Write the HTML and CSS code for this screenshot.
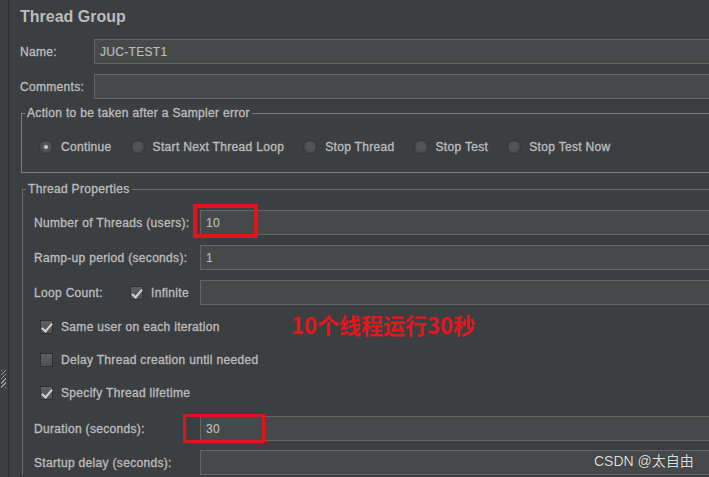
FILE: index.html
```html
<!DOCTYPE html>
<html>
<head>
    <link rel="stylesheet" href="styles.css">
</head>
<body>
    <div class="side">
        <div class="grip"></div>
    </div>
    <div class="main">
        <h1 class="title">Thread Group</h1>

        <div class="row">
            <label class="row-label">Name:</label>
            <input class="field" type="text" value="JUC-TEST1">
        </div>
        <div class="row">
            <label class="row-label">Comments:</label>
            <input class="field" type="text" value="">
        </div>

        <fieldset class="group action-group">
            <legend>Action to be taken after a Sampler error</legend>
            <div class="radios">
                <div class="radio-option"><span class="radio checked"></span>Continue</div>
                <div class="radio-option"><span class="radio"></span>Start Next Thread Loop</div>
                <div class="radio-option"><span class="radio"></span>Stop Thread</div>
                <div class="radio-option"><span class="radio"></span>Stop Test</div>
                <div class="radio-option"><span class="radio"></span>Stop Test Now</div>
            </div>
        </fieldset>

        <fieldset class="group props-group">
            <legend>Thread Properties</legend>

            <div class="prop">
                <label class="prop-label">Number of Threads (users):</label>
                <input class="field" type="text" value="10">
                <span class="mark mark-threads"></span>
            </div>
            <div class="prop">
                <label class="prop-label">Ramp-up period (seconds):</label>
                <input class="field" type="text" value="1">
            </div>
            <div class="prop">
                <label class="prop-label loop-label">Loop Count:</label>
                <span class="check-option infinite"><span class="box checked"></span>Infinite</span>
                <input class="field" type="text" value="">
            </div>

            <div class="checks">
                <div class="check-option"><span class="box checked"></span>Same user on each iteration</div>
                <div class="check-option"><span class="box"></span>Delay Thread creation until needed</div>
                <div class="check-option"><span class="box checked"></span>Specify Thread lifetime</div>
            </div>

            <div class="prop duration">
                <label class="prop-label">Duration (seconds):</label>
                <input class="field" type="text" value="30">
                <span class="mark mark-duration"></span>
            </div>
            <div class="prop">
                <label class="prop-label">Startup delay (seconds):</label>
                <input class="field" type="text" value="">
            </div>
        </fieldset>

        <div class="note">10个线程运行30秒</div>
    </div>
    <div class="watermark">CSDN @太自由</div>
</body>
</html>
```

FILE: styles.css
```css
body {
    margin: 0;
    height: 100vh;
    display: flex;
    overflow: hidden;
    background-color: #3c3f41;
    font-family: "Liberation Sans", Arial, sans-serif;
    font-size: 12px;
    color: #bbbbbb;
}

.side {
    width: 8px;
    flex: none;
    border-right: 1px solid #2b2d2f;
}

.grip {
    width: 5px;
    height: 18px;
    margin: 370px 0 0 1px;
    background: repeating-linear-gradient(135deg, #9a9a9a 0 1px, transparent 1px 3px);
}

.main {
    position: relative;
    flex: 1;
    min-width: 0;
    padding-left: 11px;
}

.title {
    margin: 7px 0 12px 0;
    font-size: 16px;
    font-weight: bold;
    color: #bbbbbb;
    line-height: 20px;
}

.row {
    display: flex;
    align-items: center;
    margin-bottom: 10px;
}

.row-label,
.prop-label,
.group legend,
.radio-option,
.check-option {
    letter-spacing: 0.32px;
    -webkit-text-stroke: 0.35px #bbbbbb;
}

.row-label {
    width: 74px;
}

.field {
    flex: 1;
    min-width: 0;
    height: 25px;
    box-sizing: border-box;
    margin: 0;
    padding: 0 5px;
    background-color: #45494a;
    border: 1px solid #646464;
    border-right: none;
    color: #bbbbbb;
    font-family: "Liberation Sans", Arial, sans-serif;
    font-size: 12px;
    letter-spacing: 0.3px;
    -webkit-text-stroke: 0.2px #bbbbbb;
    outline: none;
}

.group {
    margin: 0 0 0 1px;
    padding: 0;
    border: 1px solid #7d7d7d;
    border-right: none;
    min-width: 0;
}

.group legend {
    padding: 0 2px;
    margin-left: 3px;
    line-height: 14px;
}

.action-group {
    margin-top: -3px;
    height: 67px;
    box-sizing: border-box;
}

.radios {
    display: flex;
    align-items: center;
    padding: 20px 0 0 17px;
}

.radio-option {
    display: flex;
    align-items: center;
    margin-right: 19px;
}

.radio {
    width: 14px;
    height: 14px;
    box-sizing: border-box;
    border-radius: 50%;
    border: 1px solid #34373a;
    background: radial-gradient(circle at 50% 40%, #55595c, #46494c);
    margin-right: 8px;
    display: flex;
    align-items: center;
    justify-content: center;
}

.radio.checked::after {
    content: "";
    width: 4px;
    height: 4px;
    border-radius: 50%;
    background-color: #c8c8c8;
}

.props-group {
    margin-top: 9px;
    margin-left: 2px;
    border-color: #6a6c6e;
    border-bottom: none;
    padding: 14px 0 0 11px;
}

.props-group legend {
    margin-left: -8px;
}

.prop {
    position: relative;
    display: flex;
    align-items: center;
    margin-bottom: 10px;
}

.prop:last-child {
    margin-bottom: 0;
}

.prop-label {
    width: 166px;
}

.loop-label {
    width: 96px;
}

.checks {
    display: flex;
    flex-direction: column;
    gap: 19px;
    padding: 5px 0 16px 6px;
}

.check-option {
    display: flex;
    align-items: center;
    line-height: 14px;
}

.infinite {
    width: 70px;
}

.box {
    width: 13px;
    height: 14px;
    box-sizing: border-box;
    border: 1px solid #2f3133;
    background: linear-gradient(#5c6063, #4c5053);
    margin-right: 8px;
    position: relative;
}

.box.checked::after {
    content: "";
    position: absolute;
    left: 3px;
    top: 0px;
    width: 4px;
    height: 9px;
    border: solid #d0d0d0;
    border-width: 0 2px 2px 0;
    transform: rotate(40deg);
}

.duration {
    margin-bottom: 9px;
}

.mark {
    position: absolute;
    border: 3px solid #e0141c;
    box-sizing: border-box;
}

.mark-threads {
    left: 159px;
    top: -6px;
    width: 65px;
    height: 34px;
    border-width: 4px;
}

.mark-duration {
    left: 149px;
    top: -2px;
    width: 82px;
    height: 29px;
}

.note {
    position: absolute;
    left: 282px;
    top: 308px;
    font-family: "Noto Sans CJK SC", sans-serif;
    font-size: 22px;
    font-weight: bold;
    color: #e8141c;
}

.watermark {
    position: absolute;
    left: 594px;
    top: 450px;
    font-family: "Liberation Sans", "Noto Sans CJK SC", sans-serif;
    font-size: 14px;
    color: #dcdcdc;
    text-shadow: 0 0 1px #222;
}
```
